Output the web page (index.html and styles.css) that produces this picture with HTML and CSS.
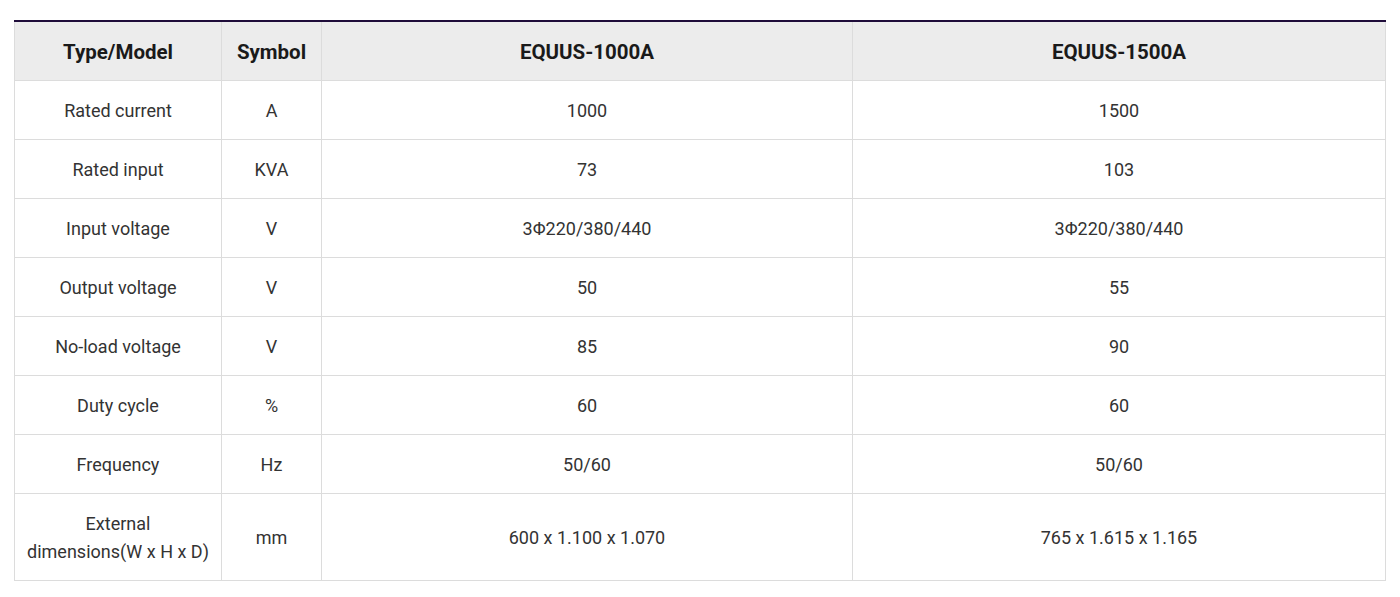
FILE: index.html
```html
<!DOCTYPE html>
<html lang="en">
<head>
<meta charset="utf-8">
<title>EQUUS Specifications</title>
<link rel="stylesheet" href="styles.css">
</head>
<body>
<div class="wrap">
  <table class="spec">
    <colgroup>
      <col class="c1"><col class="c2"><col class="c3"><col class="c4">
    </colgroup>
    <thead>
      <tr><th>Type/Model</th><th>Symbol</th><th>EQUUS-1000A</th><th>EQUUS-1500A</th></tr>
    </thead>
    <tbody>
      <tr><td>Rated current</td><td>A</td><td>1000</td><td>1500</td></tr>
      <tr><td>Rated input</td><td>KVA</td><td>73</td><td>103</td></tr>
      <tr><td>Input voltage</td><td>V</td><td>3Φ220/380/440</td><td>3Φ220/380/440</td></tr>
      <tr><td>Output voltage</td><td>V</td><td>50</td><td>55</td></tr>
      <tr><td>No-load voltage</td><td>V</td><td>85</td><td>90</td></tr>
      <tr><td>Duty cycle</td><td>%</td><td>60</td><td>60</td></tr>
      <tr><td>Frequency</td><td>Hz</td><td>50/60</td><td>50/60</td></tr>
      <tr class="tall"><td>External<br>dimensions(W x H x D)</td><td>mm</td><td>600 x 1.100 x 1.070</td><td>765 x 1.615 x 1.165</td></tr>
    </tbody>
  </table>
</div>
</body>
</html>
```
FILE: styles.css
```css
html, body {
  margin: 0;
  padding: 0;
  background: #fff;
}
.wrap {
  padding: 20px 15px 0 14px;
}
.spec {
  width: 1371px;
  border-collapse: collapse;
  table-layout: fixed;
  border-top: 2px solid #1f0c3a;
  font-family: Roboto, "Noto Sans", sans-serif;
  color: #333;
  font-size: 18px;
}
.c1 { width: 207px; }
.c2 { width: 100px; }
.c3 { width: 531px; }
.c4 { width: 533px; }
.spec th, .spec td {
  border: 1px solid #dcdcdc;
  text-align: center;
  vertical-align: middle;
  padding: 2px 0 0;
  height: 56px;
  line-height: 28px;
}
.spec thead th {
  border-top: 0;
  background: #ececec;
  font-weight: 700;
  font-size: 20.5px;
  height: 56px;
  color: #1a1a1a;
}
.spec tr.tall td {
  height: 84px;
}
```
